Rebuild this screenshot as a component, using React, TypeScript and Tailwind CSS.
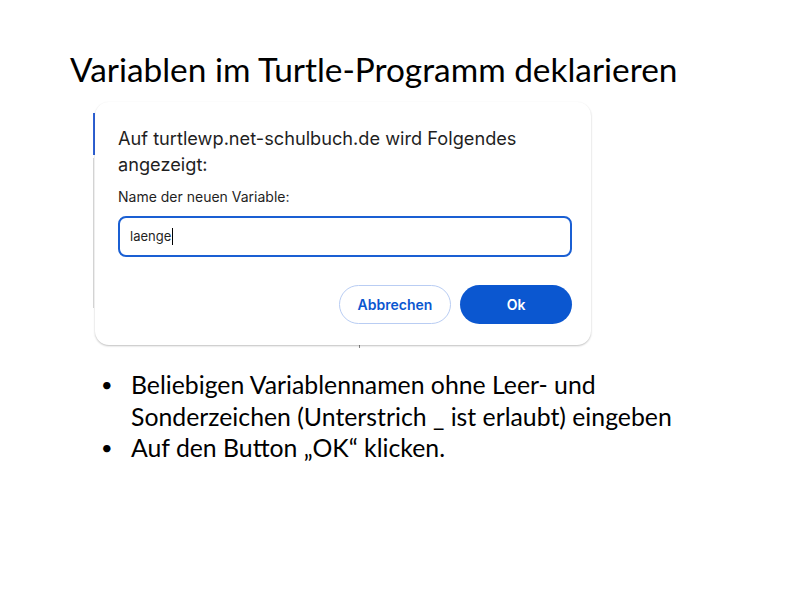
import React from 'react';

const sys = { fontFamily: 'Inter, "Noto Sans", sans-serif' };

function PromptDialog() {
  return (
    <div className="relative ml-[93px] mt-[10px] h-[248px] w-[500px] bg-white">
      {/* Teile der Seite hinter dem Dialog */}
      <div className="absolute left-0 top-[13px] h-[42px] w-[2px] bg-[#2f62d6]" />
      <div className="absolute left-0 top-[58px] h-[150px] w-px bg-[#d6d6d6]" />
      <div className="absolute bottom-0 left-[266px] h-[4px] w-px bg-[#888]" />

      <div
        className="absolute left-[2px] top-[2px] h-[243px] w-[496px] rounded-[14px] bg-white px-[23px] pt-[23px] shadow-[0_1px_2px_rgba(0,0,0,0.25)]"
        style={sys}
      >
        <p className="text-[18.2px] leading-[26px] text-[#1f1f1f]">
          Auf turtlewp.net-schulbuch.de wird Folgendes
          <br />
          angezeigt:
        </p>
        <p className="mt-[11px] text-[14px] leading-[18px] text-[#1f1f1f]">Name der neuen Variable:</p>
        <div className="mt-[10px] flex h-[41px] w-[454px] items-center rounded-[8px] border-2 border-[#1a5fd3] px-[10px]">
          <span className="text-[13px] text-[#1f1f1f]">laenge</span>
          <span className="ml-px h-[17px] w-px bg-black" />
        </div>
        <div className="mt-[28px] flex w-[454px] justify-end gap-[9px]">
          <button className="h-[39px] w-[112px] rounded-full border border-[#b9cdf3] text-[14px] font-semibold text-[#0b57d0]">
            Abbrechen
          </button>
          <button className="h-[39px] w-[112px] rounded-full bg-[#0b57d0] text-[14px] font-semibold text-white">
            Ok
          </button>
        </div>
      </div>
    </div>
  );
}

export default function App() {
  return (
    <div className="h-[600px] w-[800px] bg-white text-black" style={{ fontFamily: 'Lato, "Open Sans", sans-serif' }}>
      <h1 className="pl-[70px] pt-[48px] text-[33.4px] leading-[42px] font-normal">
        Variablen im Turtle-Programm deklarieren
      </h1>
      <PromptDialog />
      <ul className="mt-[21px] text-[24.8px] leading-[31.5px]">
        <li className="flex pl-[101px]">
          <span className="w-[30px] text-[20px]">•</span>
          <span>
            Beliebigen Variablennamen ohne Leer- und
            <br />
            Sonderzeichen (Unterstrich _ ist erlaubt) eingeben
          </span>
        </li>
        <li className="flex pl-[101px]">
          <span className="w-[30px] text-[20px]">•</span>
          <span>Auf den Button „OK“ klicken.</span>
        </li>
      </ul>
    </div>
  );
}
